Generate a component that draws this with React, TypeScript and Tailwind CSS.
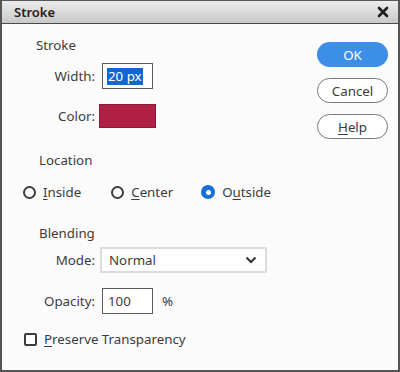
import React from "react";

function Radio({ checked }: { checked?: boolean }) {
  return checked ? (
    <span className="w-[14px] h-[14px] rounded-full bg-[#1570d6] flex items-center justify-center">
      <span className="w-[5px] h-[5px] rounded-full bg-white" />
    </span>
  ) : (
    <span className="w-[13px] h-[13px] rounded-full border-2 border-[#3c3c3c] bg-white" />
  );
}

export default function App() {
  return (
    <div
      className="w-[400px] h-[372px] bg-[#fbfbfb] border-2 border-t border-[#555555] flex flex-col text-[#3b3b3b] text-[13.3px] leading-[20px]"
      style={{ fontFamily: '"Noto Sans", "Open Sans", sans-serif' }}
    >
      <div className="h-[23px] shrink-0 bg-gradient-to-b from-[#ececec] to-[#c9c9c9] border-b border-[#4a4a4a] flex items-center justify-between pl-[12px] pr-[9px]">
        <span className="text-[13px] font-semibold text-[#222]">Stroke</span>
        <svg width="12" height="12" viewBox="0 0 12 12">
          <path d="M2 2 L10 10 M10 2 L2 10" stroke="#1e1e1e" strokeWidth="2.6" strokeLinecap="round" />
        </svg>
      </div>
      <div className="flex flex-1">
        <div className="flex flex-col pl-[21px] w-[300px]">
          <div className="mt-[11px] h-[20px] pl-[13px]">Stroke</div>
          <div className="mt-[8px] h-[26px] flex items-center">
            <span className="w-[72px] text-right">Width:</span>
            <span className="ml-[7px] w-[51px] h-[26px] border border-[#5a5a5a] bg-white flex items-center pl-[4px]">
              <span className="bg-[#0f68d1] text-white leading-[17px] px-[1px]">20 px</span>
            </span>
          </div>
          <div className="mt-[15px] h-[24px] flex items-center">
            <span className="w-[72px] text-right">Color:</span>
            <span className="ml-[4px] w-[57px] h-[24px] bg-[#b11f45] border border-[#8e1a39]" />
          </div>
          <div className="mt-[22px] h-[20px] pl-[16px]">Location</div>
          <div className="mt-[12px] h-[20px] flex items-center">
            <Radio />
            <span className="ml-[7px]">
              <span className="underline underline-offset-2">I</span>nside
            </span>
            <span className="ml-[30px] flex items-center">
              <Radio />
              <span className="ml-[7px]">
                <span className="underline underline-offset-2">C</span>enter
              </span>
            </span>
            <span className="ml-[28px] flex items-center">
              <Radio checked />
              <span className="ml-[7px]">
                O<span className="underline underline-offset-2">u</span>tside
              </span>
            </span>
          </div>
          <div className="mt-[21px] h-[20px] pl-[16px]">Blending</div>
          <div className="mt-[4px] h-[26px] flex items-center">
            <span className="w-[72px] text-right">Mode:</span>
            <span className="ml-[5px] w-[167px] h-[26px] border-2 border-[#dcdcdc] bg-white flex items-center justify-between pl-[7px] pr-[8px]">
              <span>Normal</span>
              <svg width="12" height="8" viewBox="0 0 12 8">
                <path d="M1.5 1.5 L6 6 L10.5 1.5" stroke="#333" strokeWidth="2" fill="none" />
              </svg>
            </span>
          </div>
          <div className="mt-[15px] h-[26px] flex items-center">
            <span className="w-[72px] text-right">Opacity:</span>
            <span className="ml-[7px] w-[51px] h-[26px] border border-[#5a5a5a] bg-white flex items-center pl-[5px]">100</span>
            <span className="ml-[9px]">%</span>
          </div>
          <div className="mt-[15px] h-[20px] flex items-center pl-[1px]">
            <span className="w-[13px] h-[13px] border-2 border-[#3c3c3c] bg-white rounded-[2px]" />
            <span className="ml-[7px]">
              <span className="underline underline-offset-2">P</span>reserve Transparency
            </span>
          </div>
        </div>
        <div className="flex flex-col pl-[15px] pt-[18px] gap-[11px]">
          <button className="w-[71px] h-[25px] rounded-full bg-[#3c8ee8] text-white flex items-center justify-center">OK</button>
          <button className="w-[71px] h-[25px] rounded-full border border-[#7a7a7a] bg-white flex items-center justify-center">Cancel</button>
          <button className="w-[71px] h-[25px] rounded-full border border-[#7a7a7a] bg-white flex items-center justify-center">
            <span className="underline underline-offset-2">H</span>elp
          </button>
        </div>
      </div>
    </div>
  );
}
